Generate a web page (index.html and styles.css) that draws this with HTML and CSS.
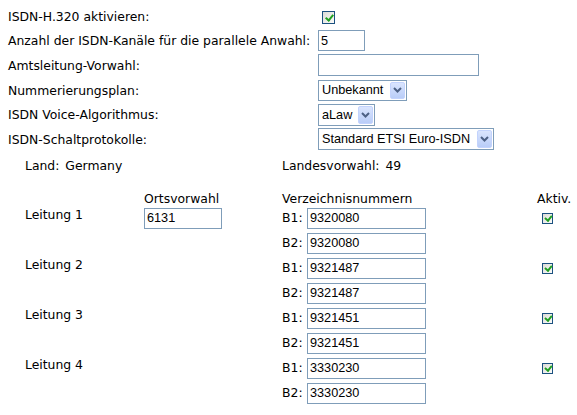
FILE: index.html
```html
<!DOCTYPE html>
<html lang="de">
<head>
  <meta charset="UTF-8">
  <title>ISDN-Einstellungen</title>
  <link rel="stylesheet" href="styles.css">
</head>
<body>

  <div class="form">
    <label>ISDN-H.320 aktivieren:</label>
    <div><input type="checkbox" class="chk" checked></div>

    <label>Anzahl der ISDN-Kanäle für die parallele Anwahl:</label>
    <div><input type="text" class="txt w-chan" value="5"></div>

    <label>Amtsleitung-Vorwahl:</label>
    <div><input type="text" class="txt w-amt" value=""></div>

    <label>Nummerierungsplan:</label>
    <div>
      <span class="sel w-plan">
        <select><option>Unbekannt</option></select>
        <span class="sel-btn"><svg width="9" height="6" viewBox="0 0 9 6"><path d="M1 1 L4.5 4.5 L8 1" fill="none" stroke="#4d6185" stroke-width="2"/></svg></span>
      </span>
    </div>

    <label>ISDN Voice-Algorithmus:</label>
    <div>
      <span class="sel w-algo">
        <select><option>aLaw</option></select>
        <span class="sel-btn"><svg width="9" height="6" viewBox="0 0 9 6"><path d="M1 1 L4.5 4.5 L8 1" fill="none" stroke="#4d6185" stroke-width="2"/></svg></span>
      </span>
    </div>

    <label>ISDN-Schaltprotokolle:</label>
    <div>
      <span class="sel w-proto">
        <select><option>Standard ETSI Euro-ISDN</option></select>
        <span class="sel-btn"><svg width="9" height="6" viewBox="0 0 9 6"><path d="M1 1 L4.5 4.5 L8 1" fill="none" stroke="#4d6185" stroke-width="2"/></svg></span>
      </span>
    </div>
  </div>

  <div class="lines">
    <div class="info span2">Land: <span class="val">Germany</span></div>
    <div class="info span2">Landesvorwahl: <span class="val">49</span></div>

    <div class="head"></div>
    <div class="head">Ortsvorwahl</div>
    <div class="head">Verzeichnisnummern</div>
    <div class="head">Aktiv.</div>

    <!-- Leitung 1 -->
    <div class="name">Leitung 1</div>
    <div><input type="text" class="txt w-orts" value="6131"></div>
    <div class="nums">
      <div class="num"><span class="bch">B1:</span><input type="text" class="txt w-num" value="9320080"></div>
      <div class="num"><span class="bch">B2:</span><input type="text" class="txt w-num" value="9320080"></div>
    </div>
    <div><input type="checkbox" class="chk small" checked></div>

    <!-- Leitung 2 -->
    <div class="name">Leitung 2</div>
    <div></div>
    <div class="nums">
      <div class="num"><span class="bch">B1:</span><input type="text" class="txt w-num" value="9321487"></div>
      <div class="num"><span class="bch">B2:</span><input type="text" class="txt w-num" value="9321487"></div>
    </div>
    <div><input type="checkbox" class="chk small" checked></div>

    <!-- Leitung 3 -->
    <div class="name">Leitung 3</div>
    <div></div>
    <div class="nums">
      <div class="num"><span class="bch">B1:</span><input type="text" class="txt w-num" value="9321451"></div>
      <div class="num"><span class="bch">B2:</span><input type="text" class="txt w-num" value="9321451"></div>
    </div>
    <div><input type="checkbox" class="chk small" checked></div>

    <!-- Leitung 4 -->
    <div class="name">Leitung 4</div>
    <div></div>
    <div class="nums">
      <div class="num"><span class="bch">B1:</span><input type="text" class="txt w-num" value="3330230"></div>
      <div class="num"><span class="bch">B2:</span><input type="text" class="txt w-num" value="3330230"></div>
    </div>
    <div><input type="checkbox" class="chk small" checked></div>
  </div>

</body>
</html>
```

FILE: styles.css
```css
body {
  margin: 0 0 0 8px;
  padding-top: 4px;
  background: #fff;
  color: #000;
  font-family: "DejaVu Sans", Verdana, sans-serif;
  font-size: 12.4px;
}

.form {
  display: grid;
  grid-template-columns: 310px auto;
  grid-auto-rows: 24.6px;
  align-items: center;
}

.form label {
  white-space: nowrap;
}

.form > div {
  display: flex;
  align-items: center;
}

/* text fields */
.txt {
  box-sizing: border-box;
  height: 21px;
  margin: 0;
  padding: 1px 2px;
  border: 1px solid #7f9db9;
  background: #fff;
  font-family: "Liberation Sans", Arial, sans-serif;
  font-size: 12.7px;
  color: #000;
  outline: none;
}

.w-chan { width: 47px; }
.w-amt { width: 161px; height: 22px; }
.w-orts { width: 78px; }
.w-num { width: 119px; }

/* select boxes */
.sel {
  position: relative;
  display: inline-block;
}

.sel select {
  appearance: none;
  -webkit-appearance: none;
  box-sizing: border-box;
  width: 100%;
  height: 21px;
  margin: 0;
  padding: 0 20px 0 3px;
  border: 1px solid #7f9db9;
  border-radius: 0;
  background: #fff;
  font-family: "Liberation Sans", Arial, sans-serif;
  font-size: 12.7px;
  color: #000;
  display: block;
}

.sel-btn {
  position: absolute;
  top: 2px;
  right: 2px;
  bottom: 2px;
  width: 15px;
  box-sizing: border-box;
  border: 1px solid #c3d3fd;
  border-radius: 2px;
  background: linear-gradient(#dae5fe, #b9cdf8);
  display: flex;
  align-items: center;
  justify-content: center;
  pointer-events: none;
}

.w-plan { width: 89px; }
.w-algo { width: 57px; }
.w-proto { width: 176px; }
.w-algo select,
.w-proto select { height: 22px; }

/* checkboxes */
.chk {
  appearance: none;
  -webkit-appearance: none;
  position: relative;
  box-sizing: border-box;
  width: 13px;
  height: 13px;
  margin: 2px 0 0 4px;
  border: 1px solid #1c5180;
  background: linear-gradient(135deg, #dcdcd7, #fbfbf9);
}

.chk:checked::after {
  content: "";
  position: absolute;
  left: 3.5px;
  top: 1px;
  width: 3px;
  height: 6px;
  border: solid #21a121;
  border-width: 0 2px 2px 0;
  transform: rotate(40deg);
}

.chk.small {
  width: 11px;
  height: 11px;
  margin: 5px 0 0 5px;
}

.chk.small:checked::after {
  left: 2.5px;
  top: 0.5px;
  width: 2.5px;
  height: 5px;
}

/* Leitungen */
.lines {
  margin-top: 7px;
  padding-left: 17px;
  display: grid;
  grid-template-columns: 119px 138px 255px auto;
  line-height: 14px;
}

.span2 {
  grid-column: span 2;
}

.info {
  padding-bottom: 19px;
  white-space: nowrap;
}

.val {
  margin-left: 2px;
}

.head {
  padding-bottom: 2px;
  white-space: nowrap;
}

.name {
  white-space: nowrap;
}

.num {
  display: flex;
  align-items: baseline;
  height: 21px;
  margin-bottom: 4px;
}

.bch {
  width: 25px;
}
```
